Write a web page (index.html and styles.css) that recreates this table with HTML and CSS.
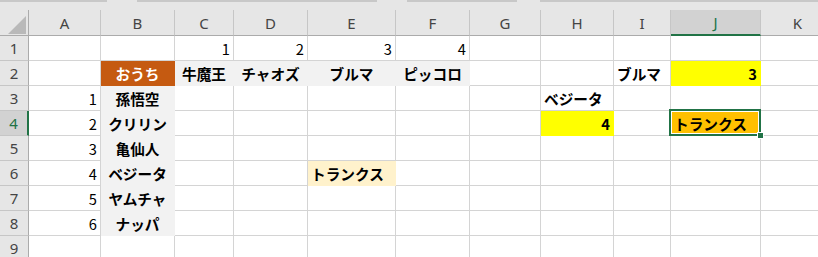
FILE: index.html
```html
<!DOCTYPE html>
<html lang="ja">
<head>
    <meta charset="UTF-8">
    <meta name="viewport" content="width=device-width, initial-scale=1.0">
    <title>Sheet1</title>
    <link rel="stylesheet" href="styles.css">
</head>
<body>
    <div class="formula-edge"></div>
    <div class="sheet" id="sheet">
        <!-- headers and cells are built by the script below -->
    </div>

    <script>
        const sheet = document.getElementById('sheet');
        const cols = ['A', 'B', 'C', 'D', 'E', 'F', 'G', 'H', 'I', 'J', 'K'];
        const rowCount = 9;
        const activeCol = 'J';
        const activeRow = 4;

        // text and classes for every non-empty cell
        const cells = {
            C1: ['1', 'num'], D1: ['2', 'num'], E1: ['3', 'num'], F1: ['4', 'num'],
            B2: ['おうち', 'b mid fill-orange'],
            C2: ['牛魔王', 'b mid fill-gray'],
            D2: ['チャオズ', 'b mid fill-gray'],
            E2: ['ブルマ', 'b mid fill-gray'],
            F2: ['ピッコロ', 'b mid fill-gray'],
            I2: ['ブルマ', 'b'],
            J2: ['3', 'b num fill-yellow'],
            A3: ['1', 'num'], B3: ['孫悟空', 'b mid fill-gray'], H3: ['ベジータ', 'b'],
            A4: ['2', 'num'], B4: ['クリリン', 'b mid fill-gray'],
            H4: ['4', 'b num fill-yellow'],
            J4: ['トランクス', 'b fill-gold selected'],
            A5: ['3', 'num'], B5: ['亀仙人', 'b mid fill-gray'],
            A6: ['4', 'num'], B6: ['ベジータ', 'b mid fill-gray'],
            E6: ['トランクス', 'b fill-cream'],
            A7: ['5', 'num'], B7: ['ヤムチャ', 'b mid fill-gray'],
            A8: ['6', 'num'], B8: ['ナッパ', 'b mid fill-gray']
        };

        let html = '<div class="corner"></div>';
        cols.forEach(col => {
            const active = col === activeCol ? ' active' : '';
            html += `<div class="col-head${active}">${col}</div>`;
        });

        for (let r = 1; r <= rowCount; r++) {
            const active = r === activeRow ? ' active' : '';
            html += `<div class="row-head${active}">${r}</div>`;
            cols.forEach(col => {
                const cell = cells[col + r];
                if (cell) {
                    html += `<div class="cell ${cell[1]}">${cell[0]}</div>`;
                } else {
                    html += '<div class="cell"></div>';
                }
            });
        }

        sheet.innerHTML = html;
    </script>
</body>
</html>
```

FILE: styles.css
```css
body {
    margin: 0;
    padding: 0;
    overflow: hidden;
    background-color: #fff;
    font-family: "Noto Sans CJK JP", "Noto Sans", sans-serif;
}

/* bottom edge of the name box / formula bar */
.formula-edge {
    height: 10px;
    background:
        linear-gradient(to right,
            #c8c8c8 0 107px,
            transparent 107px 137px,
            #c8c8c8 137px 377px,
            transparent 377px 407px,
            #c8c8c8 407px 517px,
            transparent 517px 540px,
            #c8c8c8 540px) top / 100% 2px no-repeat,
        #e6e6e6;
}

.sheet {
    display: grid;
    grid-template-columns: 29px 72px 74px 59px 74px 88px 74px 71px 73px 57px 90px 74px;
    grid-template-rows: 26px;
    grid-auto-rows: 25px;
    width: 835px;
}

.sheet > div {
    box-sizing: border-box;
}

.corner {
    position: relative;
    background-color: #e6e6e6;
    border-right: 1px solid #ababab;
    border-bottom: 1px solid #ababab;
}

.corner::after {
    content: "";
    position: absolute;
    left: 8px;
    top: 6px;
    width: 18px;
    height: 18px;
    background-color: #b9b9b9;
    clip-path: polygon(100% 0, 100% 100%, 0 100%);
}

.col-head,
.row-head {
    display: flex;
    align-items: center;
    justify-content: center;
    background-color: #e6e6e6;
    color: #444;
    font-family: "Noto Sans", sans-serif;
    font-size: 15px;
}

.col-head {
    border-right: 1px solid #c6c6c6;
    border-bottom: 1px solid #ababab;
}

.row-head {
    border-right: 1px solid #ababab;
    border-bottom: 1px solid #c6c6c6;
}

.col-head.active {
    background-color: #d2d2d2;
    color: #217346;
    border-bottom: 2px solid #217346;
}

.row-head.active {
    background-color: #d2d2d2;
    color: #217346;
    border-right: 2px solid #217346;
}

.cell {
    display: flex;
    align-items: center;
    padding: 0 3px;
    border-right: 1px solid #d4d4d4;
    border-bottom: 1px solid #d4d4d4;
    color: #000;
    font-size: 14.67px;
    white-space: nowrap;
}

.b {
    font-weight: bold;
}

.num {
    justify-content: flex-end;
}

.mid {
    justify-content: center;
}

/* filled cells hide their gridlines */
.fill-gray,
.fill-orange,
.fill-yellow,
.fill-gold,
.fill-cream {
    border-color: transparent;
}

.fill-gray {
    background-color: #f2f2f2;
}

.fill-orange {
    background-color: #c55a11;
    color: #fff;
}

.fill-yellow {
    background-color: #ffff00;
}

.fill-gold {
    background-color: #ffc000;
}

.fill-cream {
    background-color: #fff2cc;
}

.selected {
    position: relative;
}

.selected::after {
    content: "";
    position: absolute;
    left: -2px;
    top: -2px;
    right: -1px;
    bottom: -1px;
    border: 2px solid #217346;
    box-shadow: inset 0 0 0 1px #fff;
    z-index: 1;
}

/* fill handle */
.selected::before {
    content: "";
    position: absolute;
    right: -4px;
    bottom: -4px;
    width: 5px;
    height: 5px;
    background-color: #217346;
    border: 1px solid #fff;
    z-index: 2;
}
```
